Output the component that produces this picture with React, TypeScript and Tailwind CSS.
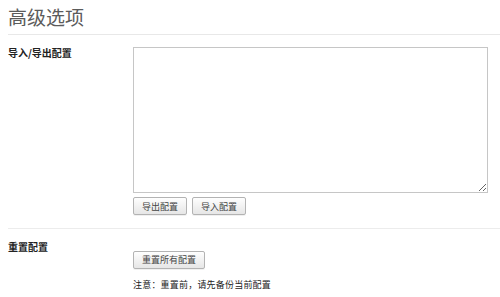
const cjk = { fontFamily: '"Noto Sans CJK SC", "Noto Sans", sans-serif' }

function Btn({ children }: { children: React.ReactNode }) {
  return (
    <button
      type="button"
      className="h-[18px] rounded-[2px] border border-[#b3b3b3] bg-gradient-to-b from-[#fefefe] to-[#e6e6e6] px-[8px] text-[9px] leading-none text-[#444] shadow-[0_1px_0_rgba(0,0,0,0.06)]"
    >
      {children}
    </button>
  )
}

export default function App() {
  return (
    <main className="min-h-screen w-[500px] bg-white pl-2" style={cjk}>
      <h1 className="h-[34px] pt-[5px] text-[19px] leading-[24px] text-[#5b5b5b]">高级选项</h1>
      <div className="h-px bg-[#e8e8e8]" />

      <section className="flex pt-[12px] pb-[13px]">
        <div className="w-[125px] text-[10px] font-bold leading-[12px] text-[#222]">导入/导出配置</div>
        <div>
          <textarea className="block h-[146px] w-[355px] resize border border-[#c6c6c6] bg-white" />
          <div className="mt-[4px] flex gap-[5px]">
            <Btn>导出配置</Btn>
            <Btn>导入配置</Btn>
          </div>
        </div>
      </section>
      <div className="h-px bg-[#ececec]" />

      <section className="flex pt-[12px]">
        <div className="w-[125px] text-[10px] font-bold leading-[12px] text-[#222]">重置配置</div>
        <div className="pt-[3px]">
          <Btn>重置所有配置</Btn>
          <p className="mt-[10px] text-[9px] leading-[11px] tracking-[0.2px] text-[#222]">注意：重置前，请先备份当前配置</p>
        </div>
      </section>
    </main>
  )
}
